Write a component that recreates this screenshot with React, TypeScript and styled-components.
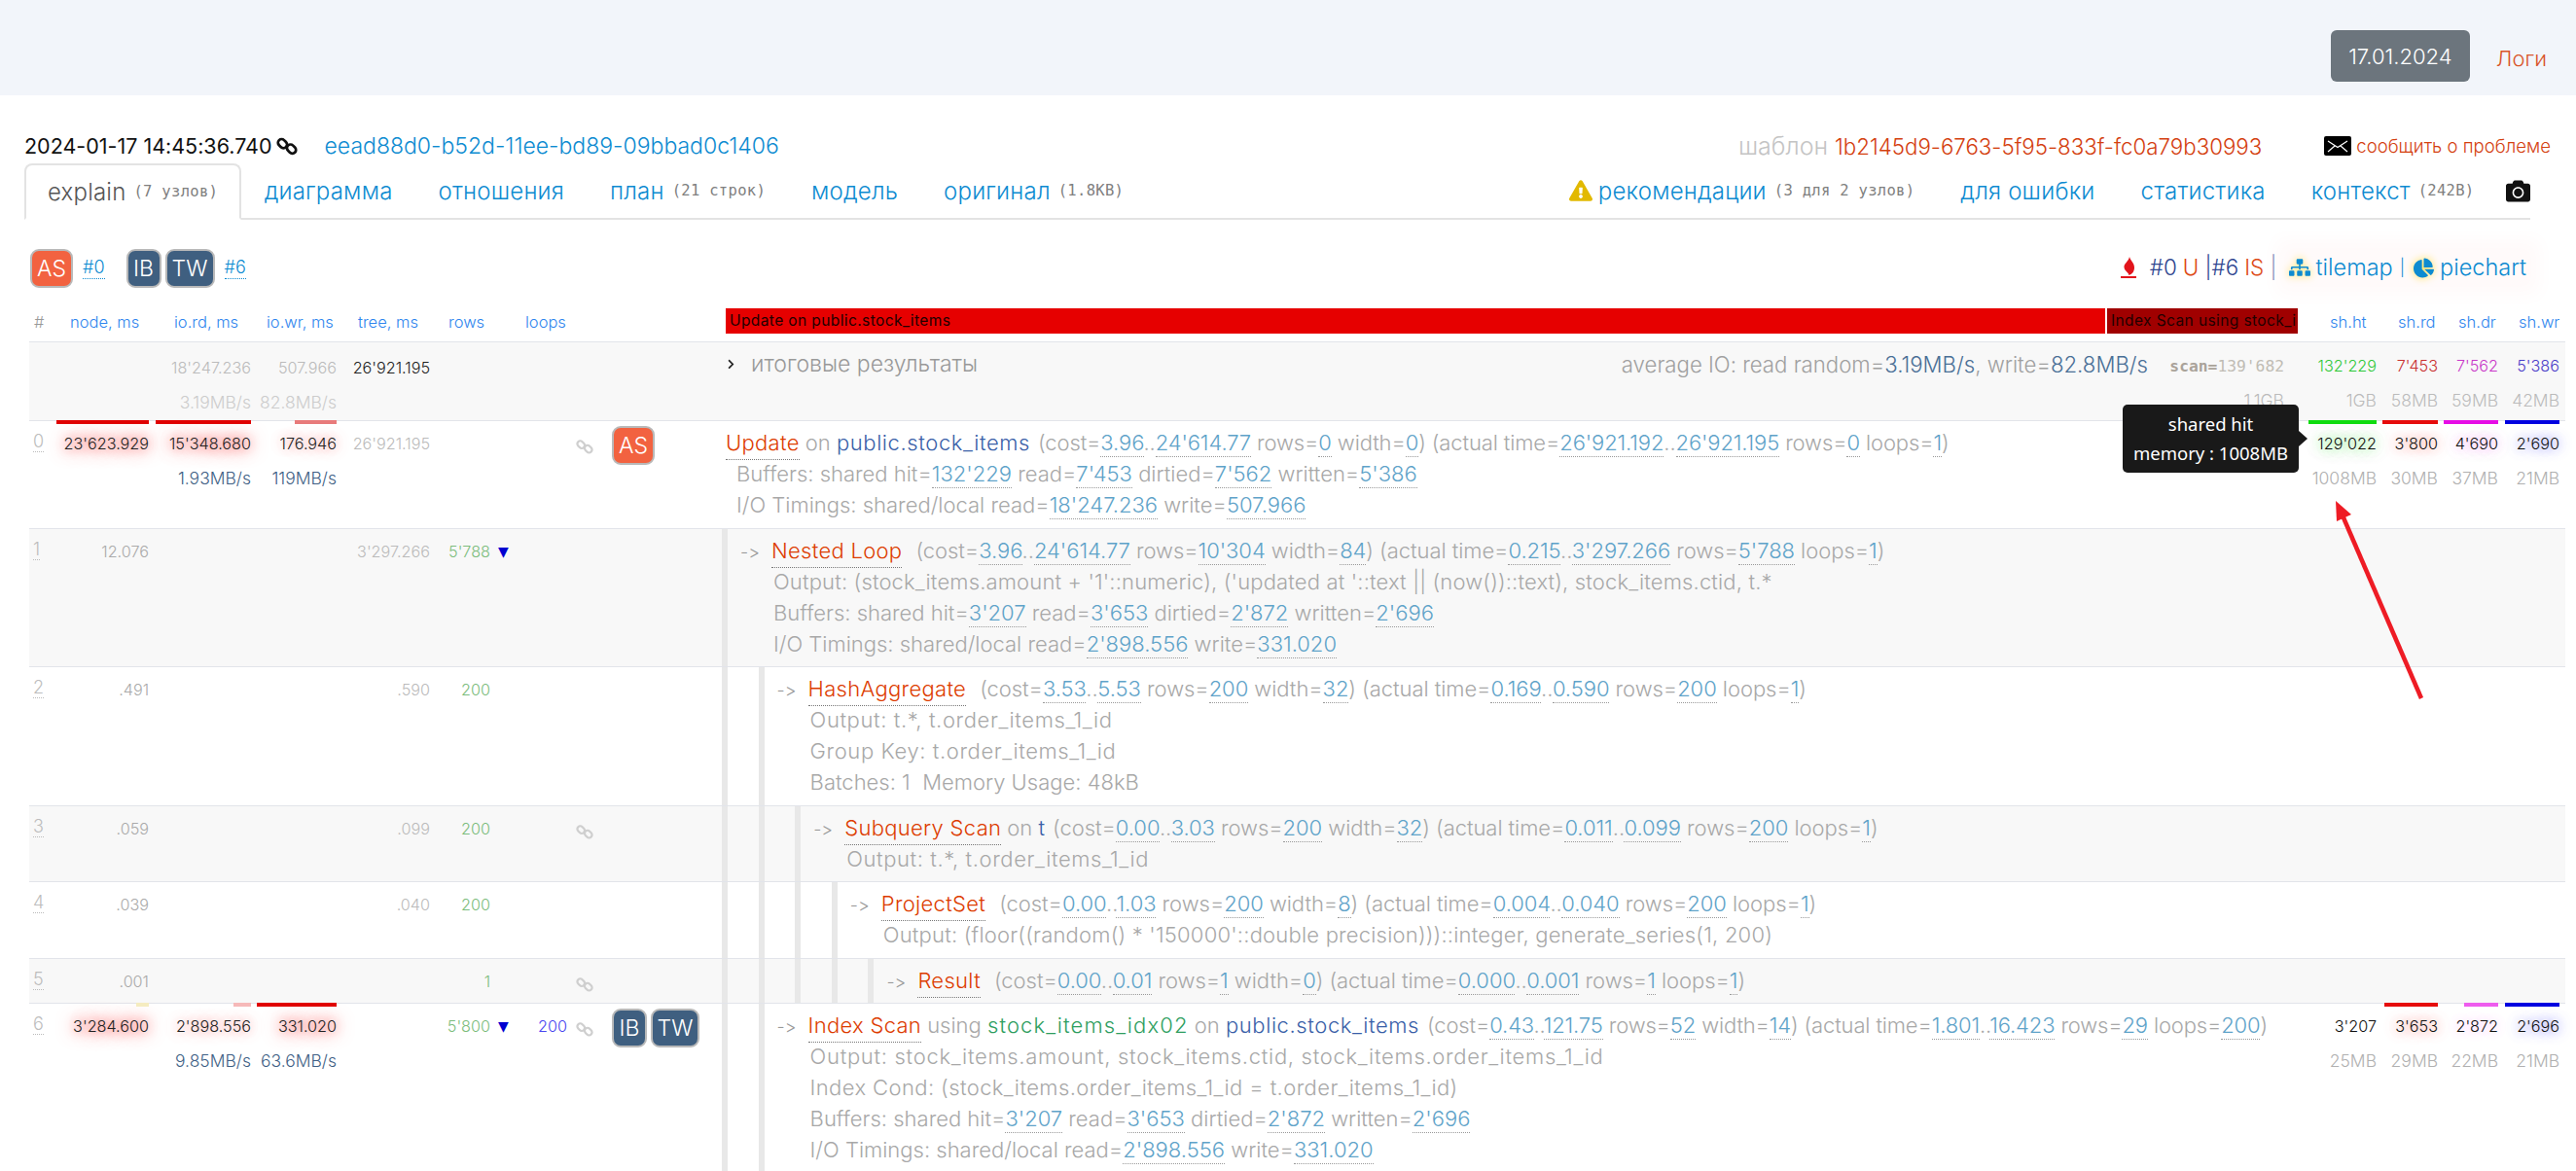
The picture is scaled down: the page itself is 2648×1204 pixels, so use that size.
import React from "react";
import styled, { createGlobalStyle } from "styled-components";
import { FaExclamationTriangle, FaCamera, FaSitemap, FaChartPie, FaChevronRight } from "react-icons/fa";

const SANS = `Inter, "Noto Sans", sans-serif`;
const MONO = `"DejaVu Sans Mono", "Liberation Mono", monospace`;
const COLS = "28px 95px 105px 88px 96px 62px 26px 53px 35px 124px 1468px 138px 95px 63px 62px 63px 6px";

const Global = createGlobalStyle`
  html, body { margin: 0; padding: 0; background: #fff; }
  body {
    font-family: ${SANS};
    font-weight: 300;
    color: #333;
    font-feature-settings: "calt" 0, "liga" 0;
    font-variant-ligatures: none;
  }
`;

const Page = styled.div`
  position: relative;
  width: 2648px;
  height: 1204px;
  overflow: hidden;
  background: #fff;
`;

const TopBand = styled.header`
  height: 98px;
  background: #f2f5fa;
  display: flex;
  justify-content: flex-end;
  align-items: flex-start;
  padding: 31px 30px 0 0;
  box-sizing: border-box;
`;
const DateButton = styled.button`
  width: 143px;
  height: 53px;
  border: none;
  border-radius: 6px;
  background: #6c757d;
  color: #fff;
  font: 300 22px ${SANS};
  font-feature-settings: "calt" 0;
`;
const LogsLink = styled.a`
  margin-left: 27px;
  line-height: 58px;
  font-size: 22px;
  color: #d9552b;
`;

const MetaRow = styled.div`
  height: 70px;
  box-sizing: border-box;
  padding: 34px 26px 0 25px;
  display: flex;
  align-items: center;
  font-size: 21.5px;
`;
const Stamp = styled.span`
  color: #111;
  font-weight: 400;
`;
const ChainButton = styled.span`
  display: inline-flex;
  margin: 0 28px 0 4px;
`;
const Uuid = styled.a`
  color: #0d8bd1;
  font-size: 23px;
  font-weight: 300;
`;
const TemplateLabel = styled.span`
  margin-left: auto;
  color: #c4c4c4;
  font-size: 25px;
`;
const TemplateHash = styled.a`
  margin-left: 7px;
  color: #d4400f;
  font-size: 22.3px;
`;
const ReportLink = styled.a`
  display: inline-flex;
  align-items: center;
  gap: 5px;
  margin-left: 64px;
  font-size: 18.6px;
  color: #d4400f;
`;

const TabBar = styled.nav`
  height: 58px;
  box-sizing: border-box;
  margin: 0 47px 0 25px;
  display: flex;
  align-items: stretch;
  border-bottom: 2px solid #e3e3e3;
`;
const Tab = styled.a<{ $active?: boolean }>`
  display: flex;
  align-items: center;
  gap: 8px;
  padding: 0 23.5px;
  font-size: 24px;
  letter-spacing: 0.2px;
  color: ${(p) => (p.$active ? "#555" : "#0d8bd1")};
  ${(p) =>
    p.$active
      ? `border: 2px solid #e3e3e3; border-bottom: 2px solid #fff; border-radius: 8px 8px 0 0; margin-bottom: -2px; padding: 0 22px; background:#fff;`
      : ""}
`;
const TabNote = styled.small`
  font: 400 15.5px ${MONO};
  color: #808080;
  letter-spacing: 0.3px;
`;
const TabSpacer = styled.span`
  margin-left: auto;
`;
const WarnIcon = styled(FaExclamationTriangle)`
  color: #e2b900;
  width: 24px;
  height: 22px;
  margin-right: -2px;
`;
const CameraTab = styled.a`
  display: flex;
  align-items: center;
  margin-left: 9px;
  color: #111;
`;

const ActionRow = styled.div`
  height: 74px;
  box-sizing: border-box;
  padding: 30px 51px 0 31px;
  display: flex;
  align-items: flex-start;
`;
const BadgeGroup = styled.span`
  display: inline-flex;
  gap: 4px;
`;
const Badge = styled.span<{ $kind: "as" | "io"; $w: number }>`
  display: inline-flex;
  align-items: center;
  justify-content: center;
  width: ${(p) => p.$w}px;
  height: 40px;
  box-sizing: border-box;
  border: 2px solid #b9b9b9;
  border-radius: 9px;
  background: ${(p) => (p.$kind === "as" ? "#f26240" : "#3f5f80")};
  color: #fff;
  font-size: 23px;
`;
const NodeRef = styled.a`
  margin: 8px 22px 0 10px;
  font-size: 18px;
  color: #0d8bd1;
  border-bottom: 1px dotted #0d8bd1;
  line-height: 22px;
`;
const Summary = styled.div`
  margin-left: auto;
  margin-top: 4px;
  display: flex;
  align-items: center;
  font-size: 22.4px;
  font-weight: 300;
  line-height: 30px;
  color: #2f4690;
`;
const Flame = styled.span`
  display: inline-flex;
  margin-right: 14px;
  border-bottom: 2px solid #e2141c;
`;
const SumMark = styled.span`
  color: #dd4814;
  margin-left: 6px;
`;
const SumGlow = styled.span`
  display: inline-flex;
  align-items: center;
  margin-left: 12px;
  background: #fffafa;
  box-shadow: 0 0 18px 14px #fffafa;
  color: #0d8bd1;
  font-size: 23.5px;
`;
const GlowIcon = styled.span`
  display: inline-flex;
  margin-right: 6px;
  filter: drop-shadow(0 0 4px #ffe14d);
`;
const SumSep = styled.span`
  color: #0d8bd1;
  font-size: 17px;
  margin: 0 9px 0 7px;
`;

const Row = styled.div<{ $alt?: boolean; $head?: boolean }>`
  display: grid;
  grid-template-columns: ${COLS};
  margin-left: 30px;
  width: 2607px;
  box-sizing: border-box;
  background: ${(p) => (p.$alt ? "#f8f8f8" : "#fff")};
  ${(p) => (p.$head ? "height: 51px;" : "border-top: 1px solid #e2e4ea;")}
`;

const HeadCell = styled.div<{ $left: number; $plain?: boolean }>`
  padding: 20px 0 0 ${(p) => p.$left}px;
  font-size: 16.5px;
  line-height: 22px;
  font-weight: 300;
  color: ${(p) => (p.$plain ? "#999" : "#2f86ee")};
  white-space: nowrap;
`;
const LoadStrip = styled.div`
  grid-column: 11 / 13;
  display: flex;
  gap: 2px;
  width: 1616px;
  margin: 17px 0 0 4px;
  height: 26px;
  font-size: 15.5px;
  letter-spacing: 0.4px;
  line-height: 26px;
  font-weight: 400;
  color: #200;
  white-space: nowrap;
`;
const LoadSegment = styled.div<{ $w: number; $c: string }>`
  flex: 0 0 ${(p) => p.$w}px;
  background: ${(p) => p.$c};
  overflow: hidden;
  padding-left: 4px;
  box-sizing: border-box;
`;

const IndexCell = styled.div`
  padding: 6px 0 0 4px;
  font-size: 18px;
  line-height: 30px;
  color: #bdbdbd;
`;
const IndexMark = styled.span`
  border-bottom: 1px dotted #bbb;
`;
const NumCell = styled.div<{ $top?: number }>`
  position: relative;
  padding-top: ${(p) => p.$top ?? 5}px;
  text-align: right;
  font-size: 16.2px;
  line-height: 36px;
  white-space: nowrap;
`;
const NumLine = styled.div<{ $color?: string; $glow?: string; $big?: boolean }>`
  color: ${(p) => p.$color ?? "#bbb"};
  ${(p) => (p.$big ? "font-size: 17.5px;" : "")}
  ${(p) => (p.$glow ? `text-shadow: 0 0 16px ${p.$glow}, 0 0 20px ${p.$glow}, 0 0 10px ${p.$glow};` : "")}
`;
const NumBar = styled.i<{ $w: number; $c: string }>`
  position: absolute;
  top: -1px;
  right: 0;
  width: ${(p) => p.$w}px;
  height: 4px;
  background: ${(p) => p.$c};
`;
const Triangle = styled.div`
  padding: 5px 0 0 8px;
  font: 400 14px/36px "DejaVu Sans", sans-serif;
  color: #0000d0;
`;
const LinkCell = styled.div`
  padding: 17px 0 0 9px;
  line-height: 0;
`;
const BadgeCell = styled.div`
  padding: 5px 0 0 11px;
  display: flex;
  align-items: flex-start;
`;
const PlanCell = styled.div`
  display: flex;
  align-items: stretch;
  min-width: 0;
`;
const Guide = styled.span<{ $last: boolean }>`
  flex: 0 0 ${(p) => (p.$last ? "6px" : "37.6px")};
  box-sizing: border-box;
  border-left: 6px solid #e8e8e8;
`;
const PlanBody = styled.div<{ $root: boolean }>`
  padding: 6px 0 7.5px ${(p) => (p.$root ? 4 : 13)}px;
  font-size: 22px;
  line-height: 32px;
  white-space: nowrap;
  color: #a8a8a8;
`;
const PlanTitle = styled.div`
  height: 32px;
`;
const Arrow = styled.span`
  display: inline-block;
  width: 32px;
  font-size: 18px;
  line-height: 1;
  color: #999;
`;
const OpName = styled.span`
  color: #dd3c00;
  letter-spacing: 0.3px;
  padding-bottom: 4px;
  border-bottom: 1px dotted #777;
  margin-right: 6px;
`;
const Qualifier = styled.span<{ $c: string; $ls: number }>`
  color: ${(p) => p.$c};
  letter-spacing: ${(p) => p.$ls}px;
`;
const Cost = styled.span<{ $ls?: number }>`
  margin-left: 8px;
  letter-spacing: ${(p) => p.$ls ?? -0.05}px;
`;
const Val = styled.span`
  color: #5fa3c9;
  padding-bottom: 1px;
  border-bottom: 1px dotted #9a9a9a;
`;
const Detail = styled.div<{ $root: boolean; $ls?: number }>`
  padding-left: ${(p) => (p.$root ? 11 : 34)}px;
  white-space: pre;
  letter-spacing: ${(p) => p.$ls ?? 0}px;
`;
const TotalsBody = styled.div`
  flex: 1;
  display: flex;
  justify-content: space-between;
  align-items: center;
  height: 32px;
  margin-top: 6px;
  padding: 0 2px 0 4px;
  font-size: 22.2px;
  color: #a0a0a0;
  white-space: nowrap;
`;
const TotalsTitle = styled.span`
  display: inline-flex;
  align-items: center;
  gap: 15px;
  color: #999;
  font-size: 23px;
  svg { color: #222; }
`;
const IoVal = styled.span`
  color: #4a6f96;
`;
const ScanCell = styled(NumCell)`
  padding-top: 6px;
`;
const ScanMono = styled.span`
  font: 400 16.3px ${MONO};
  color: #c0bcb4;
`;
const ScanKey = styled.b`
  color: #aaa39a;
  font-weight: 700;
`;

const Tip = styled.div`
  position: absolute;
  left: 2182px;
  top: 416px;
  width: 181px;
  height: 70px;
  border-radius: 5px;
  background: #191919;
  color: #fff;
  font: 400 18.5px/30px "Noto Sans", "Open Sans", sans-serif;
  text-align: center;
  padding-top: 5px;
  box-sizing: border-box;
  &::after {
    content: "";
    position: absolute;
    left: 100%;
    top: 27px;
    border: 8px solid transparent;
    border-left: 9px solid #191919;
    border-right: none;
  }
`;
const Annotation = styled.svg`
  position: absolute;
  left: 2390px;
  top: 505px;
`;

const Chain = ({ c, s = 22, w = 3 }: { c: string; s?: number; w?: number }) => (
  <svg width={s} height={s} viewBox="0 0 24 24" fill="none" stroke={c} strokeWidth={w}>
    <rect x="1.5" y="5.5" width="11" height="8" rx="4" transform="rotate(45 7 9.5)" />
    <rect x="11.5" y="11.5" width="11" height="8" rx="4" transform="rotate(45 17 15.5)" />
  </svg>
);

const Envelope = () => (
  <svg width="28" height="20" viewBox="0 0 28 20">
    <rect width="28" height="20" rx="2" fill="#000" />
    <path d="M4 5 14 11.5 24 5M4 16 11 10M24 16 17 10" stroke="#fff" strokeWidth="1.2" fill="none" />
  </svg>
);

const FlameIcon = () => (
  <svg width="16" height="20" viewBox="0 0 16 20">
    <path d="M9 0C10 4 14 6 14 11C14 15 12 18 8 19C9.5 17 4 15 3.5 11C3 7 8 5 9 0Z" fill="#e2141c" />
  </svg>
);

const Pl = ({ t }: { t: string }) => (
  <>
    {t.split(/(\{[^}]*\})/).map((part, i) =>
      part.startsWith("{") ? <Val key={i}>{part.slice(1, -1)}</Val> : <React.Fragment key={i}>{part}</React.Fragment>
    )}
  </>
);

type Num = { v?: string; sub?: string; glow?: string; color?: string; bar?: [number, string] };
type Line = { t: string; ls?: number };

interface Node {
  idx: string;
  alt: boolean;
  depth: number;
  node?: Num;
  rd?: Num;
  wr?: Num;
  tree?: Num;
  rows?: string;
  tri?: boolean;
  loops?: string;
  link?: boolean;
  badges?: [string, "as" | "io", number][];
  name: string;
  pre?: React.ReactNode;
  cost: string;
  costLs?: number;
  lines: Line[];
  sh?: Num[];
}

const RED = "rgba(255,40,40,.5)";
const SOFT = "rgba(255,60,60,.28)";
const DARK = "#222";
const MB = "#3f5f85";

const nodes: Node[] = [
  {
    idx: "0", alt: false, depth: 0,
    node: { v: "23'623.929", glow: RED, color: DARK, bar: [95, "#e00000"] },
    rd: { v: "15'348.680", sub: "1.93MB/s", glow: RED, color: DARK, bar: [98, "#e00000"] },
    wr: { v: "176.946", sub: "119MB/s", glow: SOFT, color: DARK, bar: [43, "#e87a7a"] },
    tree: { v: "26'921.195" },
    link: true, badges: [["AS", "as", 44]],
    name: "Update",
    pre: <>on <Qualifier $c="#3a5fa8" $ls={0.6}>public.stock_items</Qualifier></>,
    cost: "(cost={3.96}..{24'614.77} rows={0} width={0}) (actual time={26'921.192}..{26'921.195} rows={0} loops={1})",
    costLs: -0.12,
    lines: [
      { t: "Buffers: shared hit={132'229} read={7'453} dirtied={7'562} written={5'386}" },
      { t: "I/O Timings: shared/local read={18'247.236} write={507.966}" },
    ],
    sh: [
      { v: "129'022", sub: "1008MB", glow: "rgba(30,230,30,.35)", color: "#111", bar: [70, "#0fdc0f"] },
      { v: "3'800", sub: "30MB", glow: "rgba(255,60,30,.3)", color: "#111", bar: [57, "#e60c0c"] },
      { v: "4'690", sub: "37MB", glow: "rgba(240,40,240,.25)", color: "#111", bar: [56, "#e60ce6"] },
      { v: "2'690", sub: "21MB", glow: "rgba(40,40,255,.3)", color: "#111", bar: [56, "#0000e0"] },
    ],
  },
  {
    idx: "1", alt: true, depth: 1,
    node: { v: "12.076", color: "#aaa" }, tree: { v: "3'297.266" }, rows: "5'788", tri: true,
    name: "Nested Loop",
    cost: "(cost={3.96}..{24'614.77} rows={10'304} width={84}) (actual time={0.215}..{3'297.266} rows={5'788} loops={1})",
    lines: [
      { t: "Output: (stock_items.amount + '1'::numeric), ('updated at '::text || (now())::text), stock_items.ctid, t.*", ls: 0.15 },
      { t: "Buffers: shared hit={3'207} read={3'653} dirtied={2'872} written={2'696}" },
      { t: "I/O Timings: shared/local read={2'898.556} write={331.020}" },
    ],
  },
  {
    idx: "2", alt: false, depth: 2,
    node: { v: ".491", color: "#aaa" }, tree: { v: ".590" }, rows: "200",
    name: "HashAggregate",
    cost: "(cost={3.53}..{5.53} rows={200} width={32}) (actual time={0.169}..{0.590} rows={200} loops={1})",
    lines: [
      { t: "Output: t.*, t.order_items_1_id", ls: 0.6 },
      { t: "Group Key: t.order_items_1_id", ls: 0.6 },
      { t: "Batches: 1  Memory Usage: 48kB" },
    ],
  },
  {
    idx: "3", alt: true, depth: 3,
    node: { v: ".059", color: "#aaa" }, tree: { v: ".099" }, rows: "200", link: true,
    name: "Subquery Scan",
    pre: <>on <Qualifier $c="#3a5fa8" $ls={0}>t</Qualifier></>,
    cost: "(cost={0.00}..{3.03} rows={200} width={32}) (actual time={0.011}..{0.099} rows={200} loops={1})",
    lines: [{ t: "Output: t.*, t.order_items_1_id", ls: 0.6 }],
  },
  {
    idx: "4", alt: false, depth: 4,
    node: { v: ".039", color: "#aaa" }, tree: { v: ".040" }, rows: "200",
    name: "ProjectSet",
    cost: "(cost={0.00}..{1.03} rows={200} width={8}) (actual time={0.004}..{0.040} rows={200} loops={1})",
    lines: [{ t: "Output: (floor((random() * '150000'::double precision)))::integer, generate_series(1, 200)", ls: 0.2 }],
  },
  {
    idx: "5", alt: true, depth: 5,
    node: { v: ".001", color: "#aaa" }, rows: "1", link: true,
    name: "Result",
    cost: "(cost={0.00}..{0.01} rows={1} width={0}) (actual time={0.000}..{0.001} rows={1} loops={1})",
    lines: [],
  },
  {
    idx: "6", alt: false, depth: 2,
    node: { v: "3'284.600", glow: RED, color: DARK, bar: [13, "#f5ecc0"] },
    rd: { v: "2'898.556", sub: "9.85MB/s", glow: SOFT, color: DARK, bar: [18, "#f6b9b9"] },
    wr: { v: "331.020", sub: "63.6MB/s", glow: RED, color: DARK, bar: [82, "#e00000"] },
    rows: "5'800", tri: true, loops: "200", link: true,
    badges: [["IB", "io", 36], ["TW", "io", 50]],
    name: "Index Scan",
    pre: (
      <>
        using <Qualifier $c="#2e9e60" $ls={1.1}>stock_items_idx02</Qualifier> on <Qualifier $c="#3a5fa8" $ls={0.6}>public.stock_items</Qualifier>
      </>
    ),
    cost: "(cost={0.43}..{121.75} rows={52} width={14}) (actual time={1.801}..{16.423} rows={29} loops={200})",
    costLs: -0.15,
    lines: [
      { t: "Output: stock_items.amount, stock_items.ctid, stock_items.order_items_1_id", ls: 0.7 },
      { t: "Index Cond: (stock_items.order_items_1_id = t.order_items_1_id)", ls: 0.4 },
      { t: "Buffers: shared hit={3'207} read={3'653} dirtied={2'872} written={2'696}" },
      { t: "I/O Timings: shared/local read={2'898.556} write={331.020}" },
    ],
    sh: [
      { v: "3'207", sub: "25MB", color: "#111" },
      { v: "3'653", sub: "29MB", glow: "rgba(255,60,30,.3)", color: "#111", bar: [55, "#e60c0c"] },
      { v: "2'872", sub: "22MB", glow: "rgba(240,40,240,.2)", color: "#111", bar: [35, "#ee5cee"] },
      { v: "2'696", sub: "21MB", glow: "rgba(40,40,255,.3)", color: "#111", bar: [56, "#0000e0"] },
    ],
  },
];

const Numeric = ({ n, subColor = MB, top, bigSub }: { n?: Num; subColor?: string; top?: number; bigSub?: boolean }) => (
  <NumCell $top={top}>
    {n?.bar && <NumBar $w={n.bar[0]} $c={n.bar[1]} />}
    {n?.v && <NumLine $color={n.color} $glow={n.glow}>{n.v}</NumLine>}
    {n?.sub && <NumLine $color={subColor} $big={bigSub}>{n.sub}</NumLine>}
  </NumCell>
);

const Header = () => (
  <Row $head>
    <HeadCell $left={5} $plain>#</HeadCell>
    <HeadCell $left={14}>node, ms</HeadCell>
    <HeadCell $left={26}>io.rd, ms</HeadCell>
    <HeadCell $left={16}>io.wr, ms</HeadCell>
    <HeadCell $left={22}>tree, ms</HeadCell>
    <HeadCell $left={19}>rows</HeadCell>
    <span />
    <HeadCell $left={10}>loops</HeadCell>
    <span />
    <span />
    <LoadStrip>
      <LoadSegment $w={1418} $c="#e60000">Update on public.stock_items</LoadSegment>
      <LoadSegment $w={196} $c="#a00000">Index Scan using stock_i</LoadSegment>
    </LoadStrip>
    <HeadCell $left={47}>sh.ht</HeadCell>
    <HeadCell $left={22}>sh.rd</HeadCell>
    <HeadCell $left={21}>sh.dr</HeadCell>
    <HeadCell $left={21}>sh.wr</HeadCell>
    <span />
  </Row>
);

const Totals = () => (
  <Row $alt>
    <span />
    <span />
    <Numeric top={8} n={{ v: "18'247.236", sub: "3.19MB/s" }} subColor="#ccc" bigSub />
    <Numeric top={8} n={{ v: "507.966", sub: "82.8MB/s" }} subColor="#ccc" bigSub />
    <Numeric top={8} n={{ v: "26'921.195", color: "#222" }} />
    <span />
    <span />
    <span />
    <span />
    <span />
    <PlanCell>
      <TotalsBody>
        <TotalsTitle>
          <FaChevronRight size={11} />
          итоговые результаты
        </TotalsTitle>
        <span>
          average IO: read random=<IoVal>3.19MB/s</IoVal>, write=<IoVal>82.8MB/s</IoVal>
        </span>
      </TotalsBody>
    </PlanCell>
    <ScanCell>
      <NumLine>
        <ScanMono>
          <ScanKey>scan=</ScanKey>139'682
        </ScanMono>
      </NumLine>
      <NumLine $big>1.1GB</NumLine>
    </ScanCell>
    <Numeric top={6} n={{ v: "132'229", sub: "1GB", color: "#30c838" }} subColor="#bbb" bigSub />
    <Numeric top={6} n={{ v: "7'453", sub: "58MB", color: "#c83030" }} subColor="#bbb" bigSub />
    <Numeric top={6} n={{ v: "7'562", sub: "59MB", color: "#c838c8" }} subColor="#bbb" bigSub />
    <Numeric top={6} n={{ v: "5'386", sub: "42MB", color: "#4a3cc8" }} subColor="#bbb" bigSub />
    <span />
  </Row>
);

const PlanRow = ({ n }: { n: Node }) => {
  const root = n.depth === 0;
  return (
    <Row $alt={n.alt}>
      <IndexCell>
        <IndexMark>{n.idx}</IndexMark>
      </IndexCell>
      <Numeric n={n.node} />
      <Numeric n={n.rd} bigSub />
      <Numeric n={n.wr} bigSub />
      <Numeric n={n.tree} />
      <Numeric n={n.rows ? { v: n.rows, color: "#7dbd7d" } : undefined} />
      <Triangle>{n.tri ? "▼" : ""}</Triangle>
      <Numeric n={n.loops ? { v: n.loops, color: "#4a46f0" } : undefined} />
      <LinkCell>{n.link && <Chain c="#cfcfcf" s={18} />}</LinkCell>
      <BadgeCell>
        <BadgeGroup>
          {n.badges?.map(([t, k, w]) => (
            <Badge key={t} $kind={k} $w={w}>{t}</Badge>
          ))}
        </BadgeGroup>
      </BadgeCell>
      <PlanCell>
        {Array.from({ length: n.depth }).map((_, i) => (
          <Guide key={i} $last={i === n.depth - 1} />
        ))}
        <PlanBody $root={root}>
          <PlanTitle>
            {!root && <Arrow>-&gt;</Arrow>}
            <OpName>{n.name}</OpName>
            {n.pre}
            <Cost $ls={n.costLs}>
              <Pl t={n.cost} />
            </Cost>
          </PlanTitle>
          {n.lines.map((l) => (
            <Detail key={l.t} $root={root} $ls={l.ls}>
              <Pl t={l.t} />
            </Detail>
          ))}
        </PlanBody>
      </PlanCell>
      <span />
      {(n.sh ?? [{}, {}, {}, {}]).map((s, i) => (
        <Numeric key={i} n={s} subColor="#b0b0b0" bigSub />
      ))}
      <span />
    </Row>
  );
};

export default function App() {
  return (
    <Page>
      <Global />
      <TopBand>
        <DateButton>17.01.2024</DateButton>
        <LogsLink>Логи</LogsLink>
      </TopBand>
      <MetaRow>
        <Stamp>2024-01-17 14:45:36.740</Stamp>
        <ChainButton>
          <Chain c="#111" />
        </ChainButton>
        <Uuid>eead88d0-b52d-11ee-bd89-09bbad0c1406</Uuid>
        <TemplateLabel>шаблон</TemplateLabel>
        <TemplateHash>1b2145d9-6763-5f95-833f-fc0a79b30993</TemplateHash>
        <ReportLink>
          <Envelope />
          сообщить о проблеме
        </ReportLink>
      </MetaRow>
      <TabBar>
        <Tab $active>explain <TabNote>(7 узлов)</TabNote></Tab>
        <Tab>диаграмма</Tab>
        <Tab>отношения</Tab>
        <Tab>план <TabNote>(21 строк)</TabNote></Tab>
        <Tab>модель</Tab>
        <Tab>оригинал <TabNote>(1.8KB)</TabNote></Tab>
        <TabSpacer />
        <Tab><WarnIcon />рекомендации <TabNote>(3 для 2 узлов)</TabNote></Tab>
        <Tab>для ошибки</Tab>
        <Tab>статистика</Tab>
        <Tab>контекст <TabNote>(242B)</TabNote></Tab>
        <CameraTab><FaCamera size={25} /></CameraTab>
      </TabBar>
      <ActionRow>
        <Badge $kind="as" $w={44}>AS</Badge>
        <NodeRef>#0</NodeRef>
        <BadgeGroup>
          <Badge $kind="io" $w={36}>IB</Badge>
          <Badge $kind="io" $w={51}>TW</Badge>
        </BadgeGroup>
        <NodeRef>#6</NodeRef>
        <Summary>
          <Flame><FlameIcon /></Flame>
          #0<SumMark>U</SumMark>&nbsp;|#6<SumMark>IS</SumMark>&nbsp;|
          <SumGlow>
            <GlowIcon><FaSitemap size={22} /></GlowIcon>
            tilemap
            <SumSep>|</SumSep>
            <GlowIcon><FaChartPie size={21} /></GlowIcon>
            piechart
          </SumGlow>
        </Summary>
      </ActionRow>
      <Header />
      <Totals />
      {nodes.map((n) => (
        <PlanRow key={n.idx} n={n} />
      ))}
      <Tip>
        shared hit
        <br />
        memory : 1008MB
      </Tip>
      <Annotation width="110" height="220" viewBox="0 0 110 220">
        <line x1="99" y1="213" x2="18" y2="25" stroke="#ee1c25" strokeWidth="4.5" />
        <polygon points="11,10 27,24 12,31" fill="#ee1c25" />
      </Annotation>
    </Page>
  );
}
